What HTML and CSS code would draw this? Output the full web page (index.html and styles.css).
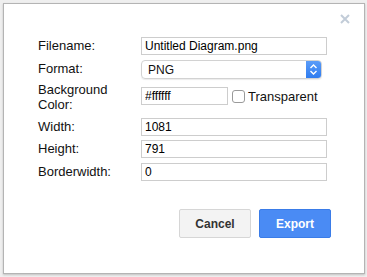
FILE: index.html
```html
<!DOCTYPE html>
<html lang="en">
<head>
  <meta charset="UTF-8" />
  <title>Export</title>
  <link rel="stylesheet" href="styles.css">
</head>
<body>
  <div class="dialog">
    <span class="close">
      <svg width="10" height="10" viewBox="0 0 10 10">
        <path d="M1 1 L9 9 M9 1 L1 9" stroke="#c2ccd8" stroke-width="2" />
      </svg>
    </span>

    <div class="form">
      <label class="label">Filename:</label>
      <input class="field" type="text" value="Untitled Diagram.png">

      <label class="label">Format:</label>
      <div class="select">
        <span class="select-value">PNG</span>
        <span class="select-arrow">
          <svg width="15" height="17" viewBox="0 0 15 17">
            <path d="M4.5 7 L7.5 4 L10.5 7 M4.5 10 L7.5 13 L10.5 10" fill="none" stroke="#fff" stroke-width="1.4" />
          </svg>
        </span>
      </div>

      <label class="label two-lines">Background<br>Color:</label>
      <div class="color-row">
        <input class="field short" type="text" value="#ffffff">
        <span class="checkbox"></span>
        <span class="check-label">Transparent</span>
      </div>

      <label class="label">Width:</label>
      <input class="field" type="text" value="1081">

      <label class="label">Height:</label>
      <input class="field" type="text" value="791">

      <label class="label">Borderwidth:</label>
      <input class="field" type="text" value="0">
    </div>

    <div class="buttons">
      <button class="btn">Cancel</button>
      <button class="btn primary">Export</button>
    </div>
  </div>
</body>
</html>
```

FILE: styles.css
```css
html {
  background: #efefef;
}

body {
  margin: 0;
  font-family: "Liberation Sans", Arial, sans-serif;
  color: #111;
}

.dialog {
  position: relative;
  box-sizing: border-box;
  width: 362px;
  height: 271px;
  margin: 3px;
  background: #fff;
  border: 1px solid #b4b4b4;
  box-shadow: 0 1px 2px rgba(0,0,0,0.2);
  padding: 33px 33px 0 34px;
}

.close {
  position: absolute;
  top: 10px;
  right: 14px;
  line-height: 0;
}

.form {
  display: grid;
  grid-template-columns: 103px 186px;
  grid-template-rows: 23px 22px 36px 22px 23px 18px;
  align-items: start;
}

.label {
  font-size: 13px;
  line-height: 18px;
}

.label.two-lines {
  line-height: 15px;
}

.field {
  box-sizing: border-box;
  width: 186px;
  height: 18px;
  margin: 0;
  padding: 0 3px;
  border: 1px solid #cdcdcd;
  font-family: "Liberation Sans", Arial, sans-serif;
  font-size: 12px;
  color: #000;
  outline: none;
}

.field.short {
  width: 87px;
}

.select {
  box-sizing: border-box;
  width: 181px;
  height: 19px;
  display: flex;
  align-items: center;
  border: 1px solid #d2d2d2;
  border-radius: 4px;
  box-shadow: 0 1px 1px rgba(0,0,0,0.08);
  overflow: hidden;
}

.select-value {
  flex: 1;
  padding-left: 6px;
  font-size: 12px;
}

.select-arrow {
  width: 15px;
  height: 17px;
  line-height: 0;
  background: linear-gradient(#5a9cf8, #2f7cf0);
}

.color-row {
  display: flex;
  align-items: center;
  margin-top: 5px;
}

.checkbox {
  box-sizing: border-box;
  width: 13px;
  height: 13px;
  margin-left: 4px;
  border: 1px solid #9a9a9a;
  border-radius: 3px;
  background: #fff;
}

.check-label {
  margin-left: 3px;
  font-size: 13px;
}

.buttons {
  display: flex;
  justify-content: flex-end;
  gap: 8px;
  margin-top: 28px;
}

.btn {
  box-sizing: border-box;
  width: 72px;
  height: 29px;
  padding: 0;
  border: 1px solid #d6d6d6;
  border-radius: 2px;
  background: #f3f3f3;
  color: #333;
  font-family: "Liberation Sans", Arial, sans-serif;
  font-size: 12px;
  font-weight: bold;
}

.btn.primary {
  background: #4a8bf4;
  border-color: #3a7ce8;
  color: #fff;
}
```
